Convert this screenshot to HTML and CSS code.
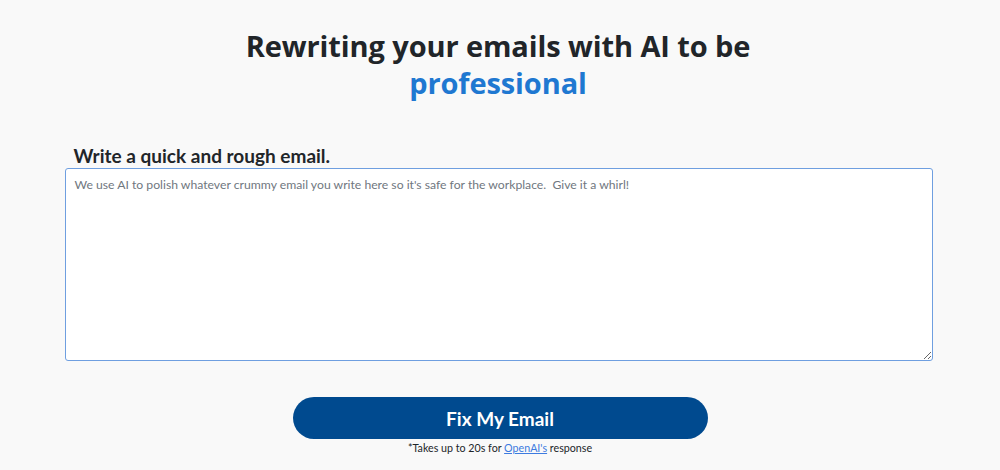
FILE: index.html
```html
<!DOCTYPE html>
<html>
<head>
<meta charset="utf-8">
<link rel="stylesheet" href="styles.css">
</head>
<body>
<main class="page">
  <h1 class="title">Rewriting your emails with AI to be<br><span class="accent">professional</span></h1>
  <section class="form">
    <label class="label" for="email">Write a quick and rough email.</label>
    <textarea id="email" class="box" placeholder="We use AI to polish whatever crummy email you write here so it's safe for the workplace.  Give it a whirl!"></textarea>
  </section>
  <div class="actions">
    <button class="btn">Fix My Email</button>
    <p class="note">*Takes up to 20s for <a href="#">OpenAI's</a> response</p>
  </div>
</main>
</body>
</html>
```

FILE: styles.css
```css
html, body {
  margin: 0;
  padding: 0;
  background: #f9f9f9;
}
body {
  font-family: "Open Sans", "Noto Sans", sans-serif;
  color: #212529;
}
.page {
  display: flex;
  flex-direction: column;
  align-items: center;
  padding-top: 27px;
}
.title {
  margin: 0 4px 0 0;
  text-align: center;
  font-size: 29px;
  line-height: 37px;
  font-weight: 700;
  color: #212529;
  letter-spacing: -0.1px;
}
.accent {
  color: #1f78d1;
}
.form {
  width: 868px;
  margin-top: 43px;
  margin-right: 3px;
  display: flex;
  flex-direction: column;
}
.label {
  font-family: "Lato", sans-serif;
  font-size: 19px;
  font-weight: 700;
  line-height: 23px;
  padding-left: 9px;
  margin-bottom: 1px;
  color: #212529;
}
.box {
  box-sizing: border-box;
  width: 868px;
  height: 193px;
  border: 1px solid #6f9fe0;
  border-radius: 3px;
  background: #fff;
  padding: 7px 9px;
  font-family: "Lato", sans-serif;
  font-size: 12.2px;
  line-height: 18px;
  color: #212529;
  resize: vertical;
  outline: none;
}
.box::placeholder {
  color: #707780;
}
.actions {
  margin-top: 36px;
  display: flex;
  flex-direction: column;
  align-items: center;
}
.btn {
  width: 415px;
  height: 42px;
  border: none;
  border-radius: 21px;
  background: #004a8f;
  color: #fff;
  font-family: "Lato", sans-serif;
  font-size: 19px;
  font-weight: 700;
  cursor: pointer;
}
.note {
  font-family: "Lato", sans-serif;
  margin: 2px 0 0;
  font-size: 10.7px;
  line-height: 14px;
  color: #212529;
}
.note a {
  color: #3d7be0;
}
```
